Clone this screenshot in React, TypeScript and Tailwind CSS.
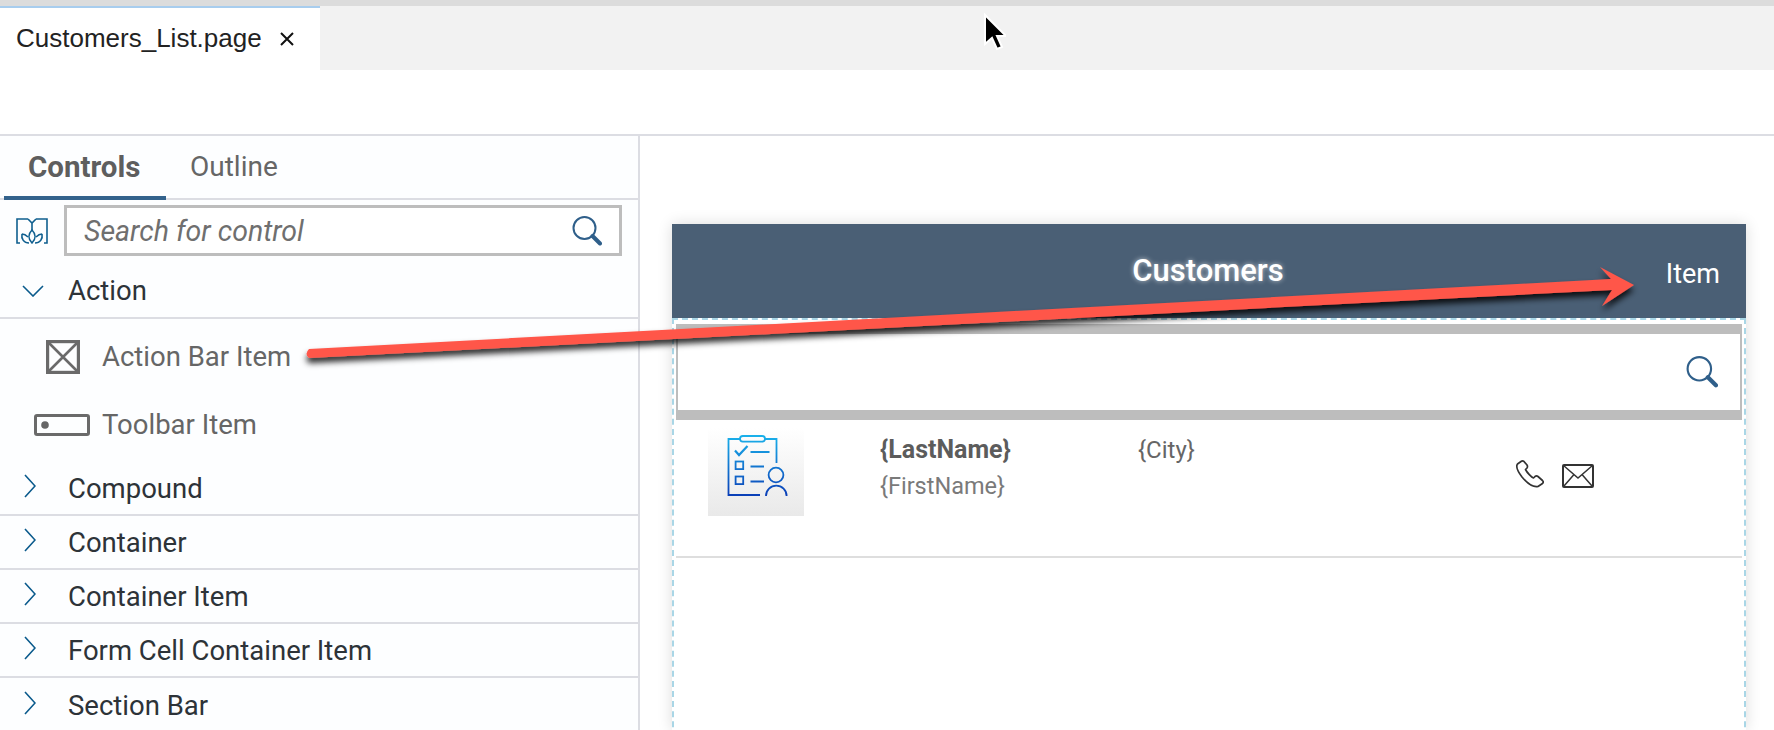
import React from "react";

const sans = "font-['Roboto',sans-serif]";

const SearchIcon = ({ className }: { className: string }) => (
  <svg viewBox="0 0 30 30" className={className} fill="none" stroke="#2f5f8a">
    <circle cx="12.5" cy="12" r="11" strokeWidth="2" />
    <path d="M20.5 20 L28 27.5" strokeWidth="4" strokeLinecap="round" />
  </svg>
);

const Chevron = () => (
  <svg viewBox="0 0 12 24" className="w-3 h-6 mb-[6px]" fill="none" stroke="#0a5a8c" strokeWidth="1.6">
    <path d="M1 1 L11 12 L1 23" />
  </svg>
);

const BookIcon = () => (
  <svg viewBox="0 0 32 26" className="w-8 h-[26px] shrink-0" fill="none" stroke="#0f5f8f" strokeWidth="1.6">
    <path d="M12 1 H1 V25 H4 M20 1 H31 V25 H28 M12 1 L16 5 L20 1 M16 5 V12" />
    <path d="M16 12 C12 16 12 21 16 25 C20 21 20 16 16 12 Z" />
    <path d="M6 16 C5 21 8 25 13 25 M26 16 C27 21 24 25 19 25 M6 16 C8 16 10 17 12 19 M26 16 C24 16 22 17 20 19" />
  </svg>
);

const ActionBarIcon = () => (
  <svg viewBox="0 0 34 34" className="w-[34px] h-[34px]" fill="none" stroke="#6a6a6a" strokeWidth="2.6">
    <rect x="1.5" y="1.5" width="31" height="31" strokeWidth="3.4" />
    <path d="M2 2 L32 32 M32 2 L2 32" />
  </svg>
);

const ToolbarIcon = () => (
  <svg viewBox="0 0 56 22" className="w-14 h-[22px]" fill="none" stroke="#6a6a6a" strokeWidth="3">
    <rect x="1.5" y="1.5" width="53" height="19" rx="1.5" />
    <circle cx="11" cy="11" r="3.8" fill="#666" stroke="none" />
  </svg>
);

const ClipboardTile = () => (
  <div className="w-24 h-[88px] bg-gradient-to-b from-white to-[#e9e9e9]">
    <svg viewBox="0 0 96 88" className="w-24 h-[88px]" fill="none" strokeWidth="1.8">
      <defs>
        <linearGradient id="clip" gradientUnits="userSpaceOnUse" x1="0" y1="8" x2="0" y2="70">
          <stop offset="0" stopColor="#1ab0ea" />
          <stop offset="1" stopColor="#0a3ab5" />
        </linearGradient>
      </defs>
      <g stroke="url(#clip)">
        <path d="M32 11 H20.5 V67 H52 M57 11 H68.5 V35" />
        <rect x="32" y="8" width="25" height="5.6" rx="2.8" />
        <path d="M27 22.5 L31 27 L39.5 18" strokeWidth="2.2" />
        <path d="M42.5 24 H61.5 M42.5 38.5 H56 M42.5 53.5 H56" />
        <rect x="27.6" y="33.5" width="7.6" height="7.6" />
        <rect x="27.6" y="48.5" width="7.6" height="7.6" />
        <circle cx="68" cy="47" r="7.4" />
        <path d="M58 68 A10.3 10.3 0 0 1 78.6 68" />
      </g>
    </svg>
  </div>
);

const PhoneIcon = () => (
  <svg viewBox="0 0 28 28" className="w-7 h-7" fill="none" stroke="#333" strokeWidth="1.7" strokeLinejoin="round">
    <path d="M5 1.5 L1.5 4 C0 6 1.5 11 6 17 C11 23 17 27.5 22 26.5 L26.5 23.5 C27.5 22.5 27.5 21.5 26.5 20.5 L22 16.5 C21 15.7 20 15.7 19 16.5 L17.5 18 C15.5 17.5 11 12.5 9.5 9.5 L11 8 C11.7 7 11.7 6.2 11 5 L8 1.5 C7 0.8 6 0.8 5 1.5 Z" />
  </svg>
);

const MailIcon = () => (
  <svg viewBox="0 0 32 24" className="w-8 h-6" fill="none" stroke="#333" strokeWidth="1.5">
    <rect x="1" y="1" width="30" height="22" rx="1" strokeWidth="2" />
    <path d="M1.5 1.5 L16 14 L30.5 1.5 M2 22 L12 10.5 M30 22 L20 10.5" />
  </svg>
);

const CollapsedRow = ({ label, last }: { label: string; last?: boolean }) => (
  <div className={`h-[54px] flex items-center pt-[2px] ${last ? "" : "border-b-2 border-[#dcdde3]"}`}>
    <div className="w-[68px] pl-6 flex items-center">
      <Chevron />
    </div>
    <span className="text-[27.5px] text-[#2d3338]">{label}</span>
  </div>
);

const Arrow = () => (
  <svg className="absolute left-0 top-0 w-[1774px] h-[730px] pointer-events-none" viewBox="0 0 1774 730" fill="none">
    <defs>
      <filter id="arrowShadow" x="-5%" y="-50%" width="110%" height="200%">
        <feDropShadow dx="0" dy="5" stdDeviation="3" floodColor="#000" floodOpacity="0.85" />
      </filter>
    </defs>
    <g filter="url(#arrowShadow)">
      <path d="M309 349 L1611 279 L1600 267 L1634 285 L1602 306 L1612 290 L309 358 Q304 354 309 349 Z" fill="#ff574a" />
    </g>
  </svg>
);

const Cursor = () => (
  <svg className="absolute left-[982px] top-[12px] w-6 h-10 pointer-events-none" viewBox="0 0 24 40">
    <path d="M3 3 V32 L10 26 L15 37 L20 35 L15 24 L24 24 Z" fill="#000" stroke="#fff" strokeWidth="2" />
  </svg>
);

export default function App() {
  return (
    <div className={`relative w-[1774px] h-[730px] overflow-hidden bg-white ${sans}`}>
      <div className="h-1.5 bg-[#dcdcdc]" />
      <div className="h-16 flex bg-[#f2f2f2]">
        <div className="w-80 h-16 bg-white border-t-2 border-[#a8cdee] flex items-center pl-4 pb-[1px] font-['Liberation_Sans',sans-serif] text-[26px] text-[#222]">
          <span>Customers_List.page</span>
          <svg viewBox="0 0 14 14" className="ml-[18px] w-[14px] h-[14px]" fill="none" stroke="#111" strokeWidth="2">
            <path d="M1 1 L13 13 M13 1 L1 13" />
          </svg>
        </div>
      </div>
      <div className="h-16" />
      <div className="flex h-[596px] border-t-2 border-[#dcdde3]">
        {/* left palette */}
        <div className="w-[640px] shrink-0 border-r-2 border-[#dcdde3] bg-[#fdfeff]">
          <div className="h-16 border-b-2 border-[#dcdde3] flex pl-1">
            <div className="w-[162px] h-16 border-b-4 border-[#33628c] pl-6 pt-[9px] font-bold text-[29.5px] text-[#5e5e5e]">
              Controls
            </div>
            <div className="pl-6 pt-[10px] text-[28px] text-[#666]">Outline</div>
          </div>
          <div className="h-[57px] flex items-center pl-4 pr-4 pt-[4px]">
            <BookIcon />
            <div className="ml-4 flex-1 h-[51px] border-[3px] border-[#bdbdbd] bg-white flex items-center justify-between pl-[17px] pr-[17px]">
              <span className="italic text-[28.5px] text-[#6f6f6f] pt-[3px]">Search for control</span>
              <SearchIcon className="w-[30px] h-[30px]" />
            </div>
          </div>
          <div className="h-[62px] flex items-center border-b-2 border-[#dcdde3] pt-[7px]">
            <div className="w-[68px] pl-[22px]">
              <svg viewBox="0 0 22 12" className="w-[22px] h-3" fill="none" stroke="#0a5a8c" strokeWidth="1.6">
                <path d="M1 1 L11 11 L21 1" />
              </svg>
            </div>
            <span className="text-[27.5px] text-[#2d3338]">Action</span>
          </div>
          <div className="h-[72px] flex items-center pt-1">
            <div className="w-[102px] pl-[46px] shrink-0">
              <ActionBarIcon />
            </div>
            <span className="text-[27.5px] text-[#666]">Action Bar Item</span>
          </div>
          <div className="h-[71px] flex items-center pb-[4px]">
            <div className="w-[102px] pl-[34px] shrink-0">
              <ToolbarIcon />
            </div>
            <span className="text-[27.5px] text-[#666]">Toolbar Item</span>
          </div>
          <CollapsedRow label="Compound" />
          <CollapsedRow label="Container" />
          <CollapsedRow label="Container Item" />
          <CollapsedRow label="Form Cell Container Item" />
          <CollapsedRow label="Section Bar" last />
        </div>
        {/* page preview */}
        <div className="flex-1 pl-8 pr-7 pt-[88px]">
          <div className="h-full shadow-[0_0_14px_rgba(0,0,0,0.14)] bg-white">
            <div className="h-[94px] bg-[#4a5f75] relative flex items-center justify-center text-white">
              <span className="pr-[2px] text-[31px] font-medium [text-shadow:0_0_5px_rgba(255,255,255,0.65)]">Customers</span>
              <span className="absolute right-[26px] top-[30px] text-[27px]">Item</span>
            </div>
            <div className="h-[500px] border-2 border-b-0 border-dashed border-[#a9d6e6] pt-[4px] px-[2px]">
              <div className="h-24 border-x-[2px] border-y-[10px] border-[#bdbdbd] bg-white flex items-center justify-end pr-[22px]">
                <SearchIcon className="w-8 h-8" />
              </div>
              <div className="h-[138px] border-b-2 border-[#dedede] flex pt-2 pl-8">
                <ClipboardTile />
                <div className="ml-[76px] w-[258px] pt-1">
                  <div className="text-[25px] font-bold leading-[36px] text-[#5c5c5c]">{"{LastName}"}</div>
                  <div className="text-[23.5px] leading-[36px] text-[#7a7a7a]">{"{FirstName}"}</div>
                </div>
                <div className="w-[378px] pt-1 text-[24px] leading-[36px] text-[#666]">{"{City}"}</div>
                <div className="flex items-end gap-[18px] h-[60px]">
                  <PhoneIcon />
                  <MailIcon />
                </div>
              </div>
            </div>
          </div>
        </div>
      </div>
      <Arrow />
      <Cursor />
    </div>
  );
}
